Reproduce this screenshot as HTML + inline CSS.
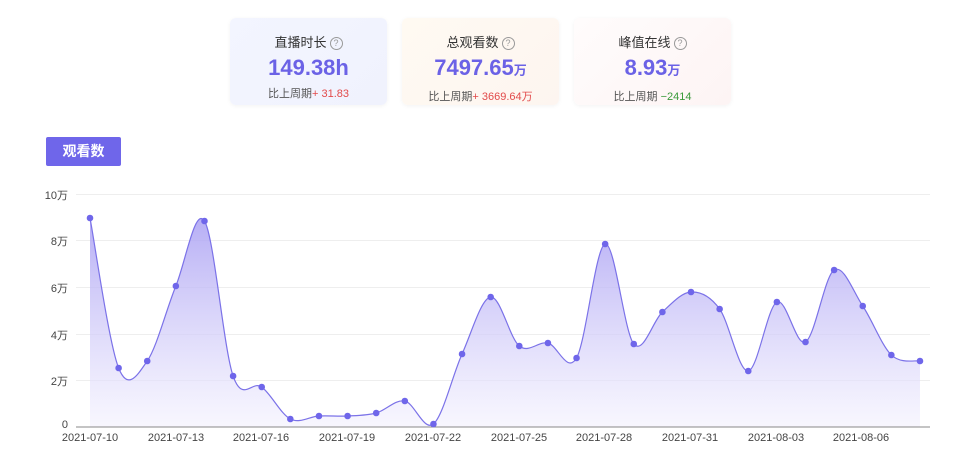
<!DOCTYPE html>
<html><head><meta charset="utf-8"><style>
body{margin:0;width:966px;height:466px;background:#fff;font-family:"Liberation Sans","Noto Sans CJK SC",sans-serif;position:relative;overflow:hidden}
.card{position:absolute;top:18px;width:157px;height:87px;border-radius:6px;text-align:center;box-shadow:0 1px 4px rgba(0,0,0,.05)}
.t{margin-top:14px;font-size:13px;color:#333}
.q{display:inline-block;width:11px;height:11px;border:1px solid #999;border-radius:50%;font-size:9px;line-height:11px;color:#999;vertical-align:1px;margin-left:3px}
.v{font-size:22px;font-weight:bold;color:#6b62e6;margin-top:4px;line-height:26px}
.v small{font-size:13px;font-weight:bold}
.s{font-size:11px;color:#555;margin-top:4px}
.r{color:#e24a4a}.g{color:#3a9a3a}
.btn{position:absolute;left:46px;top:137px;width:75px;height:29px;background:#6f66ea;border-radius:2px;color:#fff;font-weight:bold;font-size:14px;line-height:29px;text-align:center}
.yl{position:absolute;font-size:11px;color:#444;right:898px}
.xl{position:absolute;top:432px;font-size:11px;color:#444;width:80px;text-align:center}
</style></head><body>
<div class="card" style="left:230px;background:linear-gradient(135deg,#f3f5ff,#f0f2fd)"><div class="t">直播时长<span class="q">?</span></div><div class="v">149.38h</div><div class="s">比上周期<span class="r">+ 31.83</span></div></div>
<div class="card" style="left:402px;background:linear-gradient(135deg,#fffaf2,#fdf5f0)"><div class="t">总观看数<span class="q">?</span></div><div class="v">7497.65<small>万</small></div><div class="s">比上周期<span class="r">+ 3669.64万</span></div></div>
<div class="card" style="left:574px;background:linear-gradient(135deg,#fffcfc,#fdf4f4)"><div class="t">峰值在线<span class="q">?</span></div><div class="v">8.93<small>万</small></div><div class="s">比上周期 <span class="g">−2414</span></div></div>
<div class="btn">观看数</div>
<div class="yl" style="top:187px">10万</div>
<div class="yl" style="top:233px">8万</div>
<div class="yl" style="top:280px">6万</div>
<div class="yl" style="top:327px">4万</div>
<div class="yl" style="top:373px">2万</div>
<div class="yl" style="top:419px">0</div>
<svg width="966" height="466" style="position:absolute;left:0;top:0">
<defs><linearGradient id="gf" x1="0" y1="0" x2="0" y2="1"><stop offset="0" stop-color="#aaa0f3" stop-opacity=".85"/><stop offset="1" stop-color="#f3f1fe" stop-opacity=".6"/></linearGradient></defs>
<g stroke="#eee" stroke-width="1">
<line x1="76" x2="930" y1="194.5" y2="194.5"/><line x1="76" x2="930" y1="240.5" y2="240.5"/><line x1="76" x2="930" y1="287.5" y2="287.5"/><line x1="76" x2="930" y1="334.5" y2="334.5"/><line x1="76" x2="930" y1="380.5" y2="380.5"/>
</g>
<path id="area" fill="url(#gf)"/>
<path id="line" fill="none" stroke="#7b72e8" stroke-width="1.2"/>
<line x1="76" x2="930" y1="427" y2="427" stroke="#888"/>
<g id="dots" fill="#6f66ea"></g>
</svg>
<div class="xl" style="left:50px">2021-07-10</div>
<div class="xl" style="left:136px">2021-07-13</div>
<div class="xl" style="left:221px">2021-07-16</div>
<div class="xl" style="left:307px">2021-07-19</div>
<div class="xl" style="left:393px">2021-07-22</div>
<div class="xl" style="left:479px">2021-07-25</div>
<div class="xl" style="left:564px">2021-07-28</div>
<div class="xl" style="left:650px">2021-07-31</div>
<div class="xl" style="left:736px">2021-08-03</div>
<div class="xl" style="left:821px">2021-08-06</div>
<script>
var ys=[218,368,361,286,221,376,387,419,416,416,413,401,424,354,297,346,343,358,244,344,312,292,309,371,302,342,270,306,355,361];
var p=ys.map(function(y,i){return [90+i*28.62,y]});
var d="M"+p[0][0]+","+p[0][1];
for(var i=0;i<p.length-1;i++){var a=p[i-1]||p[i],b=p[i],c=p[i+1],e=p[i+2]||c;
d+=" C"+(b[0]+(c[0]-a[0])/6)+","+(b[1]+(c[1]-a[1])/6)+" "+(c[0]-(e[0]-b[0])/6)+","+(c[1]-(e[1]-b[1])/6)+" "+c[0]+","+c[1];}
document.getElementById("line").setAttribute("d",d);
document.getElementById("area").setAttribute("d",d+" L"+p[p.length-1][0]+",427 L90,427 Z");
var g=document.getElementById("dots"),h="";
p.forEach(function(q){h+='<circle cx="'+q[0]+'" cy="'+q[1]+'" r="3.3"/>'});g.innerHTML=h;
</script>
</body></html>
